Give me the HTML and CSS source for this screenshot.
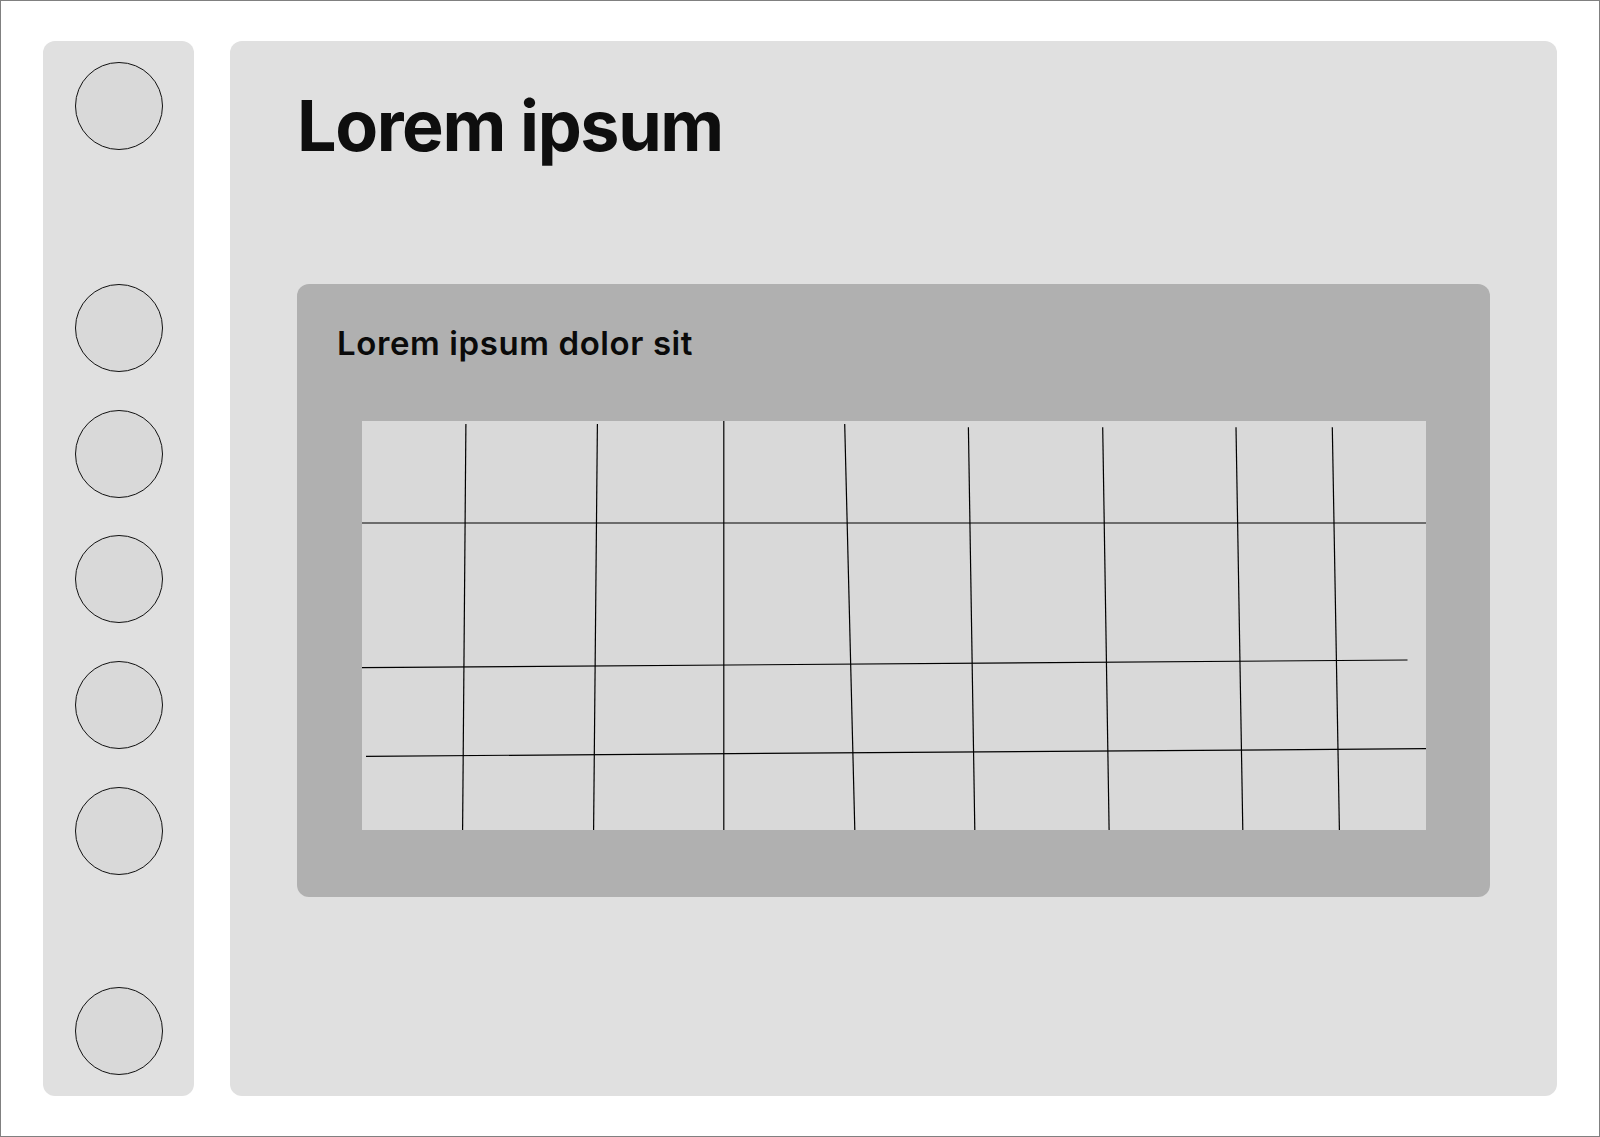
FILE: index.html
```html
<!DOCTYPE html>
<html lang="en">
<head>
<meta charset="utf-8">
<title>Wireframe</title>
<link rel="stylesheet" href="styles.css">
</head>
<body>
<div class="frame">
  <aside class="sidebar">
    <div class="dot"></div>
    <div class="dot dot-group-start"></div>
    <div class="dot"></div>
    <div class="dot"></div>
    <div class="dot"></div>
    <div class="dot"></div>
    <div class="dot dot-bottom"></div>
  </aside>
  <main class="main">
    <h1 class="title">Lorem ipsum</h1>
    <section class="card">
      <h2 class="card-title">Lorem ipsum dolor sit</h2>
      <div class="grid-box">
        <svg class="grid-svg" width="1064" height="409" viewBox="0 0 1064 409">
          <g stroke="#000" stroke-width="1.2" fill="none">
            <line x1="103.9" y1="3" x2="100.6" y2="409"/>
            <line x1="235.4" y1="3" x2="231.6" y2="409"/>
            <line x1="361.8" y1="0" x2="361.8" y2="409"/>
            <line x1="482.7" y1="3" x2="492.8" y2="409"/>
            <line x1="606.4" y1="6.3" x2="612.8" y2="409"/>
            <line x1="740.7" y1="6.3" x2="747.1" y2="409"/>
            <line x1="874" y1="6.3" x2="880.8" y2="409"/>
            <line x1="970.3" y1="6.3" x2="977.4" y2="409"/>
            <line x1="0" y1="102" x2="1064" y2="102"/>
            <line x1="0" y1="246.7" x2="1045.5" y2="239"/>
            <line x1="4" y1="335.3" x2="1064" y2="327.7"/>
          </g>
        </svg>
      </div>
    </section>
  </main>
</div>
</body>
</html>
```

FILE: styles.css
```css
* {
  box-sizing: border-box;
}

html, body {
  margin: 0;
  padding: 0;
  background: #ffffff;
}

body {
  font-family: "Inter", "Noto Sans", "Liberation Sans", sans-serif;
}

.frame {
  width: 1600px;
  height: 1137px;
  border: 1px solid #808080;
  padding: 40px 42px;
  display: flex;
  gap: 36px;
}

.sidebar {
  width: 151px;
  flex: 0 0 151px;
  background: #e0e0e0;
  border-radius: 12px;
  padding: 21px 0;
  display: flex;
  flex-direction: column;
  align-items: center;
}

.dot {
  width: 88px;
  height: 88px;
  border-radius: 50%;
  border: 1px solid #111;
  background: #d9d9d9;
  flex: 0 0 88px;
  margin-top: 37.7px;
}

.dot:first-child {
  margin-top: 0;
}

.dot-group-start {
  margin-top: 134px;
}

.dot-bottom {
  margin-top: auto;
}

.main {
  flex: 1 1 auto;
  background: #e0e0e0;
  border-radius: 12px;
  padding: 42.5px 67px 67px 67px;
  display: flex;
  flex-direction: column;
}

.title {
  margin: 0;
  font-size: 70px;
  line-height: 84px;
  font-weight: 700;
  letter-spacing: -0.02em;
  color: #0e0e0e;
}

.card {
  margin-top: 116.5px;
  background: #b0b0b0;
  border-radius: 12px;
  padding: 39.5px 40px 67px 40px;
  height: 613px;
}

.card-title {
  margin: 0;
  font-size: 33px;
  line-height: 39.5px;
  font-weight: 600;
  letter-spacing: 0.6px;
  color: #0a0a0a;
}

.grid-box {
  margin: 58px 24px 0 25px;
  width: 1064px;
  height: 409px;
  background: #d9d9d9;
}

.grid-svg {
  display: block;
}
```
